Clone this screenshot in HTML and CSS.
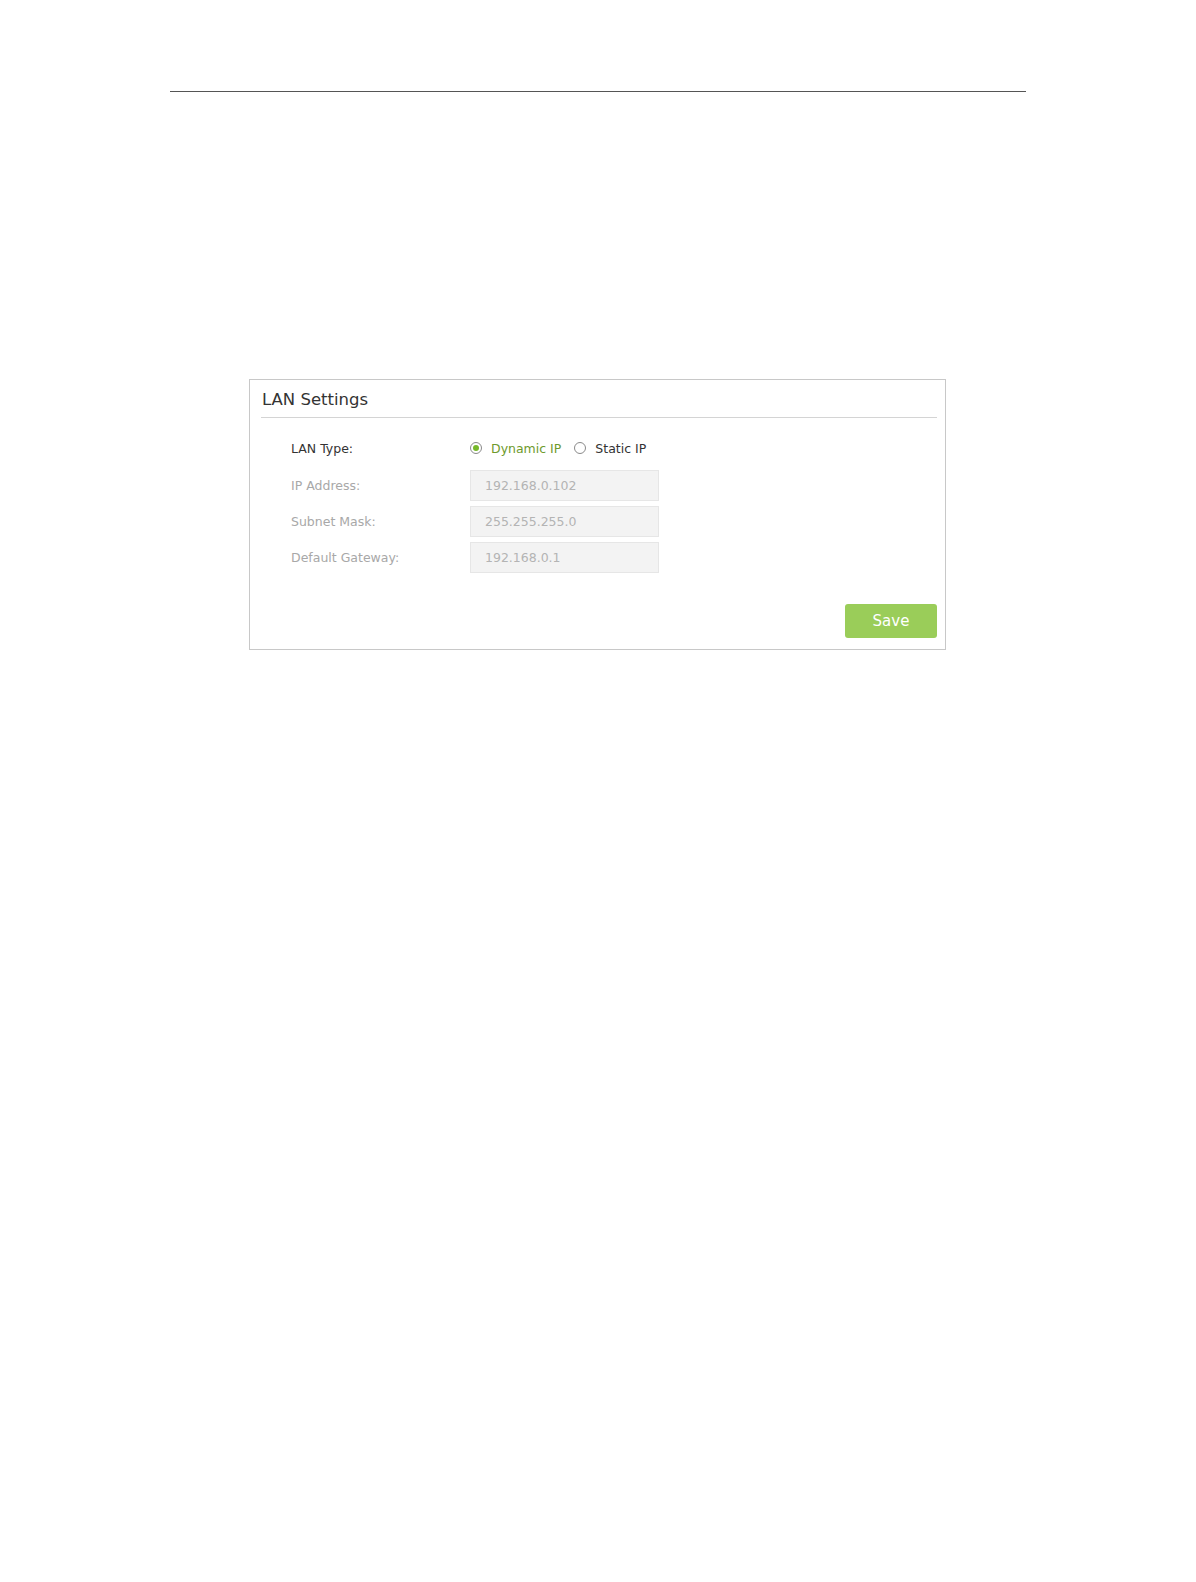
FILE: index.html
```html
<!DOCTYPE html>
<html lang="en">
<head>
    <meta charset="UTF-8">
    <title>LAN Settings</title>
    <link rel="stylesheet" href="styles.css">
</head>
<body>
    <div class="page">
        <div class="top-rule"></div>
        <div class="panel">
            <div class="panel-title">LAN Settings</div>
            <div class="form">
                <div class="row">
                    <span class="label dark">LAN Type:</span>
                    <div class="radios">
                        <span class="radio on"><i></i>Dynamic IP</span>
                        <span class="radio"><i></i>Static IP</span>
                    </div>
                </div>
                <div class="row">
                    <span class="label">IP Address:</span>
                    <span class="field">192.168.0.102</span>
                </div>
                <div class="row">
                    <span class="label">Subnet Mask:</span>
                    <span class="field">255.255.255.0</span>
                </div>
                <div class="row">
                    <span class="label">Default Gateway:</span>
                    <span class="field">192.168.0.1</span>
                </div>
            </div>
            <div class="actions">
                <button class="save">Save</button>
            </div>
        </div>
    </div>
</body>
</html>
```
FILE: styles.css
```css
body{
    margin: 0;
    background: #ffffff;
    font-family: "DejaVu Sans", Verdana, sans-serif;
}
.page{
    padding-top: 91px;
}
.top-rule{
    margin-left: 170px;
    width: 856px;
    height: 1px;
    background: #555555;
}
.panel{
    margin: 287px 0 0 249px;
    width: 695px;
    height: 269px;
    border: 1px solid #c8c8c8;
    display: flex;
    flex-direction: column;
}
.panel-title{
    margin: 0 8px 0 11px;
    padding: 9px 0 6px 1px;
    font-size: 16.5px;
    line-height: 22px;
    color: #333333;
    border-bottom: 1px solid #d4d4d4;
}
.form{
    padding: 17px 0 0 41px;
    display: flex;
    flex-direction: column;
    gap: 5px;
}
.row{
    display: flex;
    align-items: center;
    height: 31px;
    font-size: 12.5px;
}
.row:first-child{
    height: 26px;
    margin-bottom: 4px;
}
.label{
    width: 179px;
    color: #a8a8a8;
}
.label.dark{
    color: #333333;
}
.radios{
    display: flex;
    gap: 13px;
}
.radio{
    display: inline-flex;
    align-items: center;
    color: #333333;
}
.radio i{
    width: 10px;
    height: 10px;
    border: 1px solid #8a8a8a;
    border-radius: 50%;
    margin-right: 9px;
    box-sizing: content-box;
    display: inline-flex;
    align-items: center;
    justify-content: center;
}
.radio.on{
    color: #6e9a2c;
}
.radio.on i::after{
    content: "";
    width: 6px;
    height: 6px;
    border-radius: 50%;
    background: #76b82a;
}
.field{
    width: 173px;
    height: 29px;
    line-height: 29px;
    padding-left: 14px;
    background: #f3f3f3;
    border: 1px solid #e6e6e6;
    color: #b4b4b4;
}
.actions{
    margin-top: auto;
    display: flex;
    justify-content: flex-end;
    padding: 0 8px 11px 0;
}
.save{
    width: 92px;
    height: 34px;
    border: none;
    border-radius: 3px;
    background: #9acd59;
    color: #ffffff;
    font-family: "DejaVu Sans", Verdana, sans-serif;
    font-size: 15px;
    cursor: pointer;
}
```
